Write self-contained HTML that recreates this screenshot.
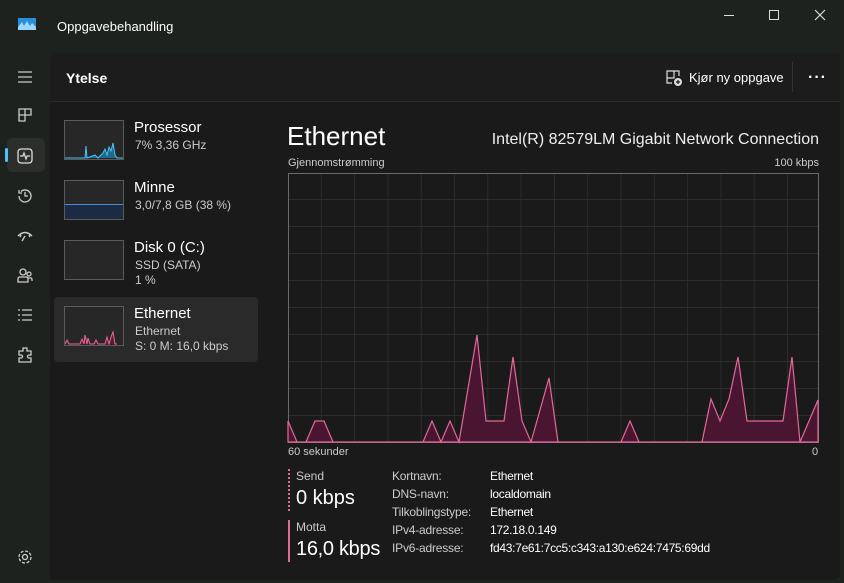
<!DOCTYPE html>
<html><head><meta charset="utf-8"><style>
*{margin:0;padding:0;box-sizing:border-box}
body{width:844px;height:583px;background:#1e221e;font-family:"Liberation Sans",sans-serif;color:#fff;position:relative;overflow:hidden}
.abs{position:absolute}
.panel{left:50px;top:53px;width:790px;height:527px;background:#1a1a1a;border-top-left-radius:8px;border-bottom-right-radius:6px}
.hdr{left:50px;top:53px;width:790px;height:49px;background:#1c1c1c;border-bottom:1px solid #2a2a2a;border-top-left-radius:8px}
.t{position:absolute;white-space:nowrap}
.thumb{position:absolute;left:64px;width:60px;height:40px;border:1px solid #5a5a5a;background:#272727}
.ic{position:absolute;left:16px;width:18px;height:18px}
</style></head><body>
<div class="abs panel"></div>
<div class="abs hdr"></div>
<svg class="abs" style="left:18px;top:18px" width="18" height="12"><rect width="18" height="12" fill="#2a8fd6"/><path d="M0 9 L4 4 L6 8 L9 3 L12 8 L14 5 L18 9 V12 H0Z" fill="#9cd6ff"/></svg>
<div class="t" style="left:57px;top:19px;font-size:13px">Oppgavebehandling</div>
<div class="abs" style="left:724px;top:15px;width:10px;height:1px;background:#ddd"></div>
<div class="abs" style="left:769px;top:10px;width:10px;height:10px;border:1px solid #ddd"></div>
<svg class="abs" style="left:814px;top:9px" width="12" height="12"><path d="M1 1L11 11M11 1L1 11" stroke="#ddd" stroke-width="1.2"/></svg>
<svg class="ic" style="top:68px" width="18" height="18"><path d="M2 4H16M2 9H16M2 14H16" stroke="#ccc" stroke-width="1.3"/></svg>
<svg class="ic" style="top:106px" width="18" height="18"><path d="M3 3H9V15H3ZM9 3H15V9H9ZM3 9H9" fill="none" stroke="#ccc" stroke-width="1.3"/></svg>
<div class="abs" style="left:7px;top:138px;width:38px;height:34px;background:#2b2e2b;border-radius:5px"></div>
<div class="abs" style="left:5px;top:148px;width:3px;height:14px;background:#4cc2ff;border-radius:2px"></div>
<svg class="ic" style="top:147px" width="18" height="18"><rect x="2" y="2" width="14" height="14" rx="3" fill="none" stroke="#ddd" stroke-width="1.3"/><path d="M4 9H7L8 6L10 12L11 9H14" fill="none" stroke="#ddd" stroke-width="1.2"/></svg>
<svg class="ic" style="top:187px" width="18" height="18"><path d="M3 9A6 6 0 1 0 5 4.5M3 3V6H6M9 5V9H12" fill="none" stroke="#ccc" stroke-width="1.3"/></svg>
<svg class="ic" style="top:227px" width="18" height="18"><path d="M2 9Q9 2 16 9M9 9L6 14M5 8L4 10M13 8L14 10" fill="none" stroke="#ccc" stroke-width="1.4"/></svg>
<svg class="ic" style="top:266px" width="18" height="18"><circle cx="7" cy="6" r="3" fill="none" stroke="#ccc" stroke-width="1.3"/><circle cx="13" cy="8" r="2" fill="none" stroke="#ccc" stroke-width="1.3"/><path d="M2 16V13Q2 11 4 11H10Q12 11 12 13V16ZM12 12H15Q16 12 16 14V15" fill="none" stroke="#ccc" stroke-width="1.3"/></svg>
<svg class="ic" style="top:306px" width="18" height="18"><path d="M2 4H4M2 9H4M2 14H4M6 4H16M6 9H16M6 14H16" stroke="#ccc" stroke-width="1.3"/></svg>
<svg class="ic" style="top:346px" width="18" height="18"><path d="M7 2H11V5H15V9H13A1.5 1.5 0 0 0 13 12H15V16H3V12H5A1.5 1.5 0 0 0 5 9H3V5H7Z" fill="none" stroke="#ccc" stroke-width="1.3"/></svg>
<svg class="ic" style="top:548px" width="18" height="18"><circle cx="9" cy="9" r="2.5" fill="none" stroke="#ccc" stroke-width="1.3"/><circle cx="9" cy="9" r="6" fill="none" stroke="#ccc" stroke-width="1.3" stroke-dasharray="3 1.7"/></svg>
<div class="t" style="left:66px;top:70px;font-size:14px;font-weight:bold">Ytelse</div>
<svg class="abs" style="left:665px;top:69px" width="18" height="18"><path d="M2 2H9V9H2ZM9 2H14V7M2 9V14H7" fill="none" stroke="#ddd" stroke-width="1.2"/><circle cx="13" cy="13" r="4" fill="#ddd"/><path d="M13 11V15M11 13H15" stroke="#1c1c1c" stroke-width="1.2"/></svg>
<div class="t" style="left:689px;top:70px;font-size:13px">Kjør ny oppgave</div>
<div class="abs" style="left:792px;top:62px;width:1px;height:30px;background:#333"></div>
<div class="t" style="left:808px;top:69px;font-size:16px;letter-spacing:1px;font-weight:bold">···</div>
<div class="thumb" style="top:120px"><svg width="58" height="38"><path d="M0 37L20 37L21 25L22 37L30 34L33 37L38 32L40 28L42 34L44 26L46 30L48 22L50 34L52 37L58 37" fill="#1d6a8a" stroke="#4cc2ff" stroke-width="1"/></svg></div>
<div class="t" style="left:134px;top:119px;font-size:15px">Prosessor</div>
<div class="t" style="left:135px;top:138px;font-size:12px;color:#ccc">7% 3,36 GHz</div>
<div class="thumb" style="top:180px"><div style="position:absolute;left:0;right:0;bottom:0;height:15px;background:#1b2b44;border-top:1px solid #4a8ad6"></div></div>
<div class="t" style="left:134px;top:179px;font-size:15px">Minne</div>
<div class="t" style="left:135px;top:198px;font-size:12px;color:#ccc">3,0/7,8 GB (38 %)</div>
<div class="thumb" style="top:240px"></div>
<div class="t" style="left:134px;top:239px;font-size:15px">Disk 0 (C:)</div>
<div class="t" style="left:135px;top:258px;font-size:12px;color:#ccc">SSD (SATA)</div>
<div class="t" style="left:135px;top:273px;font-size:12px;color:#ccc">1 %</div>
<div class="abs" style="left:54px;top:297px;width:204px;height:65px;background:#2a2a2a;border-radius:4px"></div>
<div class="thumb" style="top:306px"><svg width="58" height="38"><path d="M0 37L2 33L4 37L15 37L17 32L19 37L20 28L22 37L23 31L25 37L29 37L31 33L33 37L40 37L42 30L44 37L46 30L48 25L50 37L52 37" fill="#5a1a38" stroke="#e76a9a" stroke-width="1"/></svg></div>
<div class="t" style="left:134px;top:305px;font-size:15px">Ethernet</div>
<div class="t" style="left:135px;top:324px;font-size:12px;color:#ccc">Ethernet</div>
<div class="t" style="left:135px;top:339px;font-size:12px;color:#ccc">S: 0 M: 16,0 kbps</div>
<div class="t" style="left:287px;top:121px;font-size:26px">Ethernet</div>
<div class="t" style="right:25px;top:131px;font-size:16px;color:#eee">Intel(R) 82579LM Gigabit Network Connection</div>
<div class="t" style="left:288px;top:157px;font-size:11px;color:#ccc">Gjennomstrømming</div>
<div class="t" style="right:25px;top:157px;font-size:11px;color:#ccc">100 kbps</div>
<svg class="abs" style="left:287px;top:172px" width="533" height="272">
<g stroke="#2c2c2c" stroke-width="1">
<path d="M34.3 1V271M67.6 1V271M100.9 1V271M134.2 1V271M167.5 1V271M200.8 1V271M234.1 1V271M267.4 1V271M300.7 1V271M334 1V271M367.3 1V271M400.6 1V271M433.9 1V271M467.2 1V271M500.5 1V271"/>
<path d="M1 27.5H532M1 54.5H532M1 81.5H532M1 108.5H532M1 135.5H532M1 162.5H532M1 189.5H532M1 216.5H532M1 243.5H532"/>
</g>
<rect x="1.5" y="1.5" width="530" height="269" fill="none" stroke="#6a6a6a"/>
<g transform="translate(-287,-172)">
<path d="M288 421L297 442L306 442L315 421L324 421L333 442L423 442L432 421L441 442L450 421L459 442L477 335L486 421L504 421L513 357L522 421L531 442L549 378L558 442L621 442L630 421L639 442L702 442L711 399L720 421L729 399L738 357L747 421L783 421L792 357L800 442L818 400L818 442L288 442Z" fill="#4a1530" stroke="#e06a98" stroke-width="1.2"/>
</g>
</svg>
<div class="t" style="left:288px;top:446px;font-size:11px;color:#ccc">60 sekunder</div>
<div class="t" style="left:812px;top:446px;font-size:11px;color:#ccc">0</div>
<div class="abs" style="left:288px;top:469px;width:0;height:42px;border-left:2px dotted #e06a98"></div>
<div class="t" style="left:296px;top:469px;font-size:12px;color:#ccc">Send</div>
<div class="t" style="left:296px;top:487px;font-size:20px">0 kbps</div>
<div class="abs" style="left:288px;top:520px;width:2px;height:42px;background:#e06a98"></div>
<div class="t" style="left:296px;top:520px;font-size:12px;color:#ccc">Motta</div>
<div class="t" style="left:296px;top:538px;font-size:20px;letter-spacing:-0.3px">16,0 kbps</div>
<div style="position:absolute;left:392px;top:467px;font-size:12px;line-height:18px;color:#ccc;letter-spacing:-0.2px">Kortnavn:<br>DNS-navn:<br>Tilkoblingstype:<br>IPv4-adresse:<br>IPv6-adresse:</div>
<div style="position:absolute;left:490px;top:467px;font-size:12px;line-height:18px;color:#fff;letter-spacing:-0.3px">Ethernet<br>localdomain<br>Ethernet<br>172.18.0.149<br>fd43:7e61:7cc5:c343:a130:e624:7475:69dd</div>
</body></html>
